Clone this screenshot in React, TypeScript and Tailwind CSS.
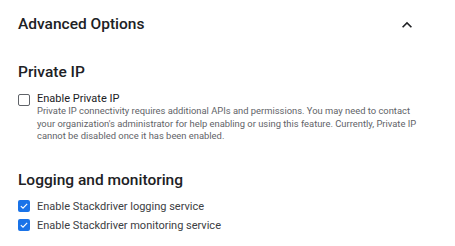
function CheckIcon() {
  return (
    <svg viewBox="0 0 12 12" className="h-[10px] w-[10px]" fill="none">
      <path d="M2.2 6.2 L4.8 8.6 L9.8 3.4" stroke="white" strokeWidth="1.4" />
    </svg>
  );
}

function ExpandLess() {
  return (
    <svg viewBox="0 0 24 24" className="mr-[20px] mt-[1px] h-[20px] w-[20px]" fill="#202124">
      <path d="M12 8l-6 6 1.41 1.41L12 10.83l4.59 4.58L18 14z" />
    </svg>
  );
}

function Box({ checked }: { checked: boolean }) {
  return checked ? (
    <div className="flex h-[12px] w-[12px] shrink-0 items-center justify-center rounded-[2px] bg-[#1a73e8]">
      <CheckIcon />
    </div>
  ) : (
    <div className="h-[12px] w-[12px] shrink-0 rounded-[2px] border-[1.5px] border-[#5f6368]" />
  );
}

export default function App() {
  return (
    <div
      className="h-[246px] w-[455px] overflow-hidden bg-white px-[18px] text-[#202124]"
      style={{ fontFamily: "Roboto, 'Noto Sans', sans-serif" }}
    >
      <div className="flex items-start justify-between pt-[14px]">
        <div className="text-[15.5px] font-medium leading-[20px]">Advanced Options</div>
        <ExpandLess />
      </div>

      <div className="mt-[27px] text-[15.5px] font-medium leading-[20px]">Private IP</div>
      <div className="mt-[10px] flex gap-[7px]">
        <div className="mt-[2px]">
          <Box checked={false} />
        </div>
        <div>
          <div className="text-[11px] leading-[13px] text-[#202124]">Enable Private IP</div>
          <div className="w-[384px] text-[9.4px] leading-[12.5px] text-[#5f6368]">
            Private IP connectivity requires additional APIs and permissions. You may need to contact
            your organization's administrator for help enabling or using this feature. Currently, Private IP
            cannot be disabled once it has been enabled.
          </div>
        </div>
      </div>

      <div className="mt-[27px] text-[15.5px] font-medium leading-[20px]">Logging and monitoring</div>
      <div className="mt-[10px] flex items-center gap-[7px]">
        <Box checked />
        <div className="text-[11px] leading-[13px] text-[#3c4043]">Enable Stackdriver logging service</div>
      </div>
      <div className="mt-[6px] flex items-center gap-[7px]">
        <Box checked />
        <div className="text-[11px] leading-[13px] text-[#3c4043]">Enable Stackdriver monitoring service</div>
      </div>
    </div>
  );
}
